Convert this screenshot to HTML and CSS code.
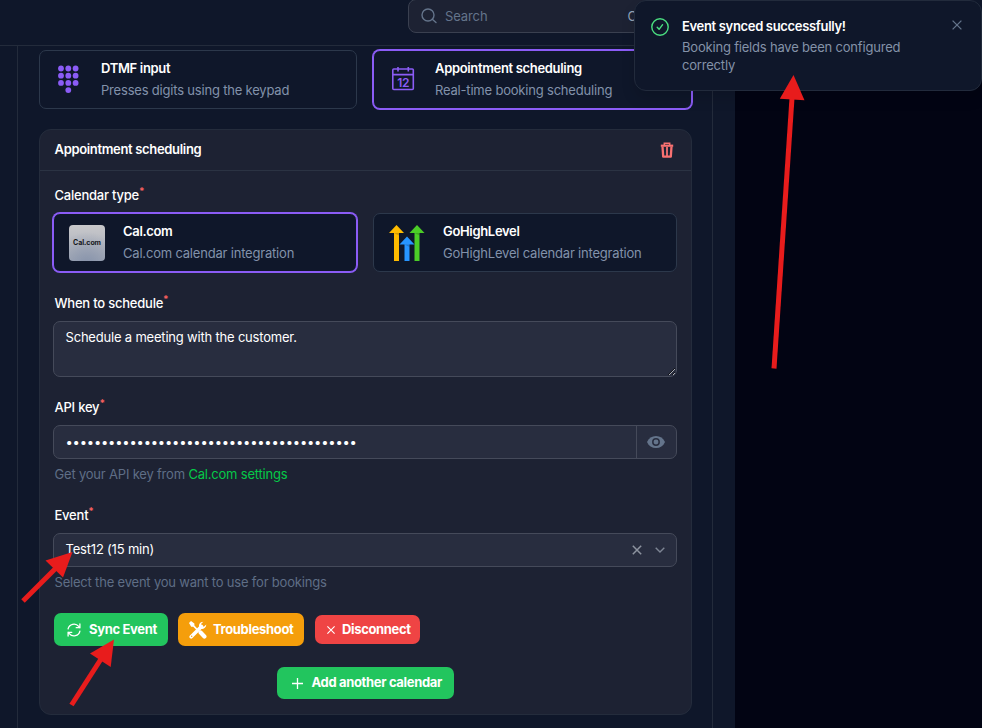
FILE: index.html
```
<!DOCTYPE html>
<html lang="en">
<head>
<meta charset="utf-8">
<title>Appointment scheduling</title>
<link rel="stylesheet" href="styles.css">
</head>
<body>
<header class="topbar">
  <div class="search">
    <svg width="16" height="16" viewBox="0 0 16 16" fill="none" stroke="#64748b" stroke-width="1.4" stroke-linecap="round"><circle cx="7" cy="7" r="6"/><path d="M11.3 11.3 15 14.6"/></svg>
    <span>Search</span><span class="shortcut">Ctrl K</span>
  </div>
  <div class="topbtn one"></div>
  <div class="topbtn two"></div>
  <div class="status"><i></i><i></i><i></i></div>
</header>
<main class="page">
  <section class="frame">
    <div class="options steps">
      <div class="option">
        <svg class="oicon" width="36" height="36" viewBox="0 0 36 36" fill="#8b5cf6"><circle cx="10" cy="6.500" r="2.900"/><circle cx="17.300" cy="6.500" r="2.900"/><circle cx="24.600" cy="6.500" r="2.900"/><circle cx="10" cy="13.700" r="2.900"/><circle cx="17.300" cy="13.700" r="2.900"/><circle cx="24.600" cy="13.700" r="2.900"/><circle cx="10" cy="20.900" r="2.900"/><circle cx="17.300" cy="20.900" r="2.900"/><circle cx="24.600" cy="20.900" r="2.900"/><circle cx="17.300" cy="28.100" r="2.900"/></svg>
        <div class="otext"><b>DTMF input</b><span>Presses digits using the keypad</span></div>
      </div>
      <div class="option selected">
        <svg class="oicon" width="36" height="36" viewBox="0 0 36 36" fill="none" stroke="#8b5cf6" stroke-width="1.600"><rect x="7.800" y="7" width="20.500" height="20.500" rx="1"/><path d="M7.800 12.600h20.500M13 5v4.500M23.300 5v4.500"/><text x="18.100" y="25" text-anchor="middle" class="calnum">12</text></svg>
        <div class="otext"><b>Appointment scheduling</b><span>Real-time booking scheduling</span></div>
      </div>
    </div>
    <article class="card">
      <div class="cardhead"><b>Appointment scheduling</b>
        <svg width="14" height="16" viewBox="0 0 14 16" fill="none" stroke="#f87171"><path d="M4.300 3V1.200h5.400V3" stroke-width="1.500"/><path d="M.8 3.700h12.400" stroke-width="2.200"/><path d="M2.500 4.500 3.200 14.700h7.600l.7-10.200" stroke-width="2.300" stroke-linejoin="round"/><path d="M7 5v9.500" stroke-width="1.800"/></svg>
      </div>
      <div class="cardbody">
        <label>Calendar type<sup>*</sup></label>
        <div class="options">
          <div class="option selected"><div class="callogo">Cal.com</div><div class="otext"><b>Cal.com</b><span>Cal.com calendar integration</span></div></div>
          <div class="option">
            <svg class="oicon" width="36" height="36" viewBox="0 0 36 36"><path d="M0 8 7.500 0 15 8h-5v28H5V8z" fill="#ffbc00"/><path d="M20.500 8 28 0l7.500 8h-5v28h-5V8z" fill="#4bcd27"/><path d="M10.500 19.500 18 11.500l7.500 8h-5V36h-5V19.500z" fill="#2795ff"/><path d="M5 8h5v2.500zM25.500 8h5v2.500zM15.500 19.500h5v2.500z" fill="#000" opacity=".18"/></svg>
            <div class="otext"><b>GoHighLevel</b><span>GoHighLevel calendar integration</span></div>
          </div>
        </div>
        <label class="later">When to schedule<sup>*</sup></label>
        <textarea class="field" spellcheck="false">Schedule a meeting with the customer.</textarea>
        <label class="later api">API key<sup>*</sup></label>
        <div class="field row">
          <input type="password" value="abcdefghijklmnopqrstuvwxyzabcdefghijklmno">
          <div class="reveal"><svg width="18" height="14" viewBox="0 0 18 14"><path d="M0 7C1.700 3 4.900 1 9 1s7.300 2 9 6c-1.700 4-4.900 6-9 6S1.700 11 0 7z" fill="#64748b"/><circle cx="9" cy="7" r="3.200" fill="#64748b" stroke="#282d3f" stroke-width="1.500"/></svg></div>
        </div>
        <p class="hint">Get your API key from <a>Cal.com settings</a></p>
        <label class="event">Event<sup>*</sup></label>
        <div class="field row select"><span>Test12 (15 min)</span>
          <svg width="10" height="10" viewBox="0 0 10 10" fill="none" stroke="#8d939f" stroke-width="1.500"><path d="m.8.8 8.400 8.400M9.200.8.8 9.200"/></svg>
          <svg class="chev" width="10" height="6" viewBox="0 0 10 6" fill="none" stroke="#7d8594" stroke-width="1.400"><path d="m.7.7 4.300 4.300L9.300.7"/></svg>
        </div>
        <p class="hint">Select the event you want to use for bookings</p>
        <div class="actions">
          <button class="btn sync"><svg width="14" height="14" viewBox="0 0 14 14" fill="none" stroke="#fff" stroke-width="1.300" stroke-linecap="round" stroke-linejoin="round"><path d="M12.900.9v3.800H9.200M1.100 13.100V9.300h3.700M1.100 5.900A6 6 0 0 1 11.700 3.400l1.200 1.300M12.900 8.100a6 6 0 0 1-10.600 2.500L1.100 9.300"/></svg><span>Sync Event</span></button>
          <button class="btn trouble"><svg width="18" height="18" viewBox="0 0 18 18" fill="none" stroke="#fff" stroke-linecap="round"><path d="M2.200 15.800 12.500 5.500" stroke-width="3.600"/><path d="M12 1.300a4.300 4.300 0 0 0-1.700 5l1.400 1.400a4.300 4.300 0 0 0 5.600-4.200l-2.500 2.200-2.300-.5-.5-2.300L14.300.7A4.500 4.500 0 0 0 12 1.300z" fill="#fff" stroke="none"/><path d="m0 2 2-2 3.400 2.600v2L9.200 8.400 8 9.600 4.200 5.800h-2z" fill="#fff" stroke="none"/><path d="m11.600 11.600 3.800 3.800" stroke-width="4.200"/><circle cx="2.700" cy="15.300" r=".7" fill="#f59e0b" stroke="none"/></svg><span>Troubleshoot</span></button>
          <button class="btn disc"><svg width="8" height="8" viewBox="0 0 8 8" fill="none" stroke="#fff" stroke-width="1.100"><path d="m.4.4 7.200 7.200M7.600.4.4 7.600"/></svg><span>Disconnect</span></button>
        </div>
        <button class="btn add"><svg width="11" height="11" viewBox="0 0 11 11" stroke="#fff" stroke-width="1.300"><path d="M5.500 0v11M0 5.500h11"/></svg><span>Add another calendar</span></button>
      </div>
    </article>
  </section>
</main>
<aside class="toast">
  <svg class="ok" width="18" height="18" viewBox="0 0 18 18" fill="none" stroke="#4ade80" stroke-width="1.400" stroke-linecap="round" stroke-linejoin="round"><circle cx="9" cy="9" r="8.200"/><path d="m6.200 9.300 1.900 2 3.500-4.600"/></svg>
  <div class="tmsg"><b>Event synced successfully!</b><span>Booking fields have been configured correctly</span></div>
  <svg class="close" width="10" height="10" viewBox="0 0 10 10" fill="none" stroke="#64748b" stroke-width="1.300"><path d="m.6.6 8.800 8.800M9.400.6.6 9.400"/></svg>
</aside>
<svg class="arrows" width="982" height="728" viewBox="0 0 982 728" fill="#e81c1c" stroke="#e81c1c"><path d="M774 368.500 792 98" stroke-width="5"/><path d="m793.500 75 11 25.300-24.700-1.500z" stroke="none"/><path d="m23 601 33-33" stroke-width="5"/><path d="M72.500 552 63 577.500 45.500 560.500z" stroke="none"/><path d="M71.500 705 101 659" stroke-width="5"/><path d="m114 639.500-3.300 27.500L90 653.500z" stroke="none"/></svg>
</body>
</html>
```

FILE: styles.css
```
* { box-sizing: border-box; }
body { margin: 0; width: 982px; height: 728px; overflow: hidden; position: relative; background: #020413; color: #fff; font: 13px/18px Inter, "Liberation Sans", sans-serif; letter-spacing: -.195px; }
svg { display: block; flex: none; }
b { font-weight: 600; letter-spacing: -.33px; }
.topbar { height: 46px; background: #0f172a; border-bottom: 1px solid #232b3b; padding-left: 408px; display: flex; align-items: flex-start; }
.search { width: 272px; height: 34px; margin-top: -1px; flex: none; border: 1px solid #3a4050; border-radius: 8px; background: #1d2233; color: #64748b; display: flex; align-items: center; gap: 8px; padding: 0 12px; letter-spacing: -.1px; }
.search span { position: relative; top: -.5px; }
.shortcut { margin-left: 132px; color: #94a3b8; white-space: nowrap; }
.topbtn { height: 34px; margin-top: -1px; border: 1px solid #3a4050; border-radius: 8px; background: #1d2233; }
.one { width: 72px; margin-left: 22px; }
.two { width: 92px; margin-left: 20px; }
.status { display: flex; gap: 2px; margin-left: 36px; }
.status i { width: 2px; height: 2px; background: #22c55e; }
.page { width: 735px; height: 682px; background: #0f172a; padding-left: 17px; }
.frame { width: 696px; height: 682px; border: solid #232b3b; border-width: 0 1px; padding: 4px 20px 0 21px; }
.options { display: grid; grid-template-columns: 1fr 1fr; gap: 16px; }
.steps { grid-template-columns: 318px 319px; }
.option { height: 59px; border: 1px solid #2c384b; border-radius: 7px; background: #0f172a; display: flex; gap: 14px; padding: 0 14px 0 11px; }
.selected { border-color: #8b5cf6; box-shadow: 0 0 0 1px #8b5cf6; }
.oicon, .callogo { width: 36px; height: 36px; flex: none; margin-top: 11px; }
.otext { padding-top: 6px; }
.otext b, .otext span { display: block; line-height: 22px; white-space: nowrap; }
.otext span { color: #8292aa; }
.calnum { font: 600 12px Inter, sans-serif; letter-spacing: -.5px; fill: #8b5cf6; stroke: none; }
.card { height: 586px; margin-top: 20px; background: #1d2233; border: 1px solid #242c3c; border-radius: 12px; }
.cardhead { height: 41px; border-bottom: 1px solid #2b3343; padding: 0 17px 0 14.500px; display: flex; align-items: center; justify-content: space-between; }
.cardhead b { margin-top: -2px; }
.cardbody { padding: 15px 14px 0 13px; }
.cardbody .option { padding-left: 15px; gap: 18px; }
label { display: block; height: 18px; line-height: 18px; margin: 0 0 9px 1.500px; font-weight: 500; letter-spacing: -.22px; }
.cardbody label sup { color: #f8605f; font-size: 10px; font-weight: 700; line-height: 0; vertical-align: 5px; }
.later { margin-top: 22px; }
.api { margin-top: 21px; }
.callogo { border-radius: 4px; background: radial-gradient(circle at 50% 110%, #8793ab, transparent 75%), linear-gradient(#c8c8cb, #a6acb8); color: #15171b; font-size: 7px; line-height: 36px; font-weight: 700; text-align: center; letter-spacing: -.05px; }
.field { width: 624px; border: 1px solid #454a5a; border-radius: 7px; background: #282d3f; color: #fff; }
textarea { display: block; height: 56px; padding: 6px 11.500px; margin: 0; font: inherit; letter-spacing: inherit; resize: vertical; outline: none; overflow: hidden; }
.row { height: 34px; display: flex; }
.row input { flex: 1; min-width: 0; padding: 0 11.500px 1px; border: 0; background: transparent; color: #fff; font: 13px Inter, sans-serif; letter-spacing: -.21px; }
.reveal { width: 40px; border-left: 1px solid #454a5a; display: flex; align-items: center; justify-content: center; padding-right: 2px; }
.hint { margin: 6px 0 0 1.500px; line-height: 18px; color: #5f6e86; white-space: nowrap; }
.hint a { color: #05c948; }
.event { margin-top: 23px; }
.select { align-items: center; padding: 0 11.500px; }
.select span { flex: 1; padding-bottom: 2px; }
.chev { margin-left: 13px; }
.actions { display: flex; align-items: center; gap: 10px; margin: 22px 0 21px 1px; height: 33px; }
.btn { display: flex; align-items: center; justify-content: flex-start; border: 0; border-radius: 7px; color: #fff; font: 700 13px/18px Inter, sans-serif; letter-spacing: -.34px; white-space: nowrap; padding: 0; }
.btn span { padding-bottom: 2px; }
.sync { width: 114px; height: 33px; background: #22c55e; gap: 8px; padding-left: 13px; }
.trouble { width: 126px; height: 33px; background: #f59e0b; gap: 6px; padding-left: 11px; }
.disc { width: 105px; height: 29px; background: #ef4444; gap: 7px; margin-left: 1px; padding-left: 12px; }
.add { width: 177px; height: 32px; background: #22c55e; gap: 9px; margin-left: 224px; padding-left: 14.500px; }
.toast { position: absolute; left: 634px; top: 0; width: 348px; height: 91px; border: 1px solid #222b3c; border-radius: 12px; background: #0f172a; box-shadow: 0 8px 14px rgba(0,0,0,.12); display: flex; padding: 17px 19px 0 16px; }
.tmsg { margin: -1px 0 0 13px; width: 240px; flex: none; }
.tmsg b, .tmsg span { display: block; }
.tmsg span { color: #8492a8; margin-top: 3px; }
.close { margin: 2px 0 0 auto; }
.arrows { position: absolute; left: 0; top: 0; pointer-events: none; }
```
